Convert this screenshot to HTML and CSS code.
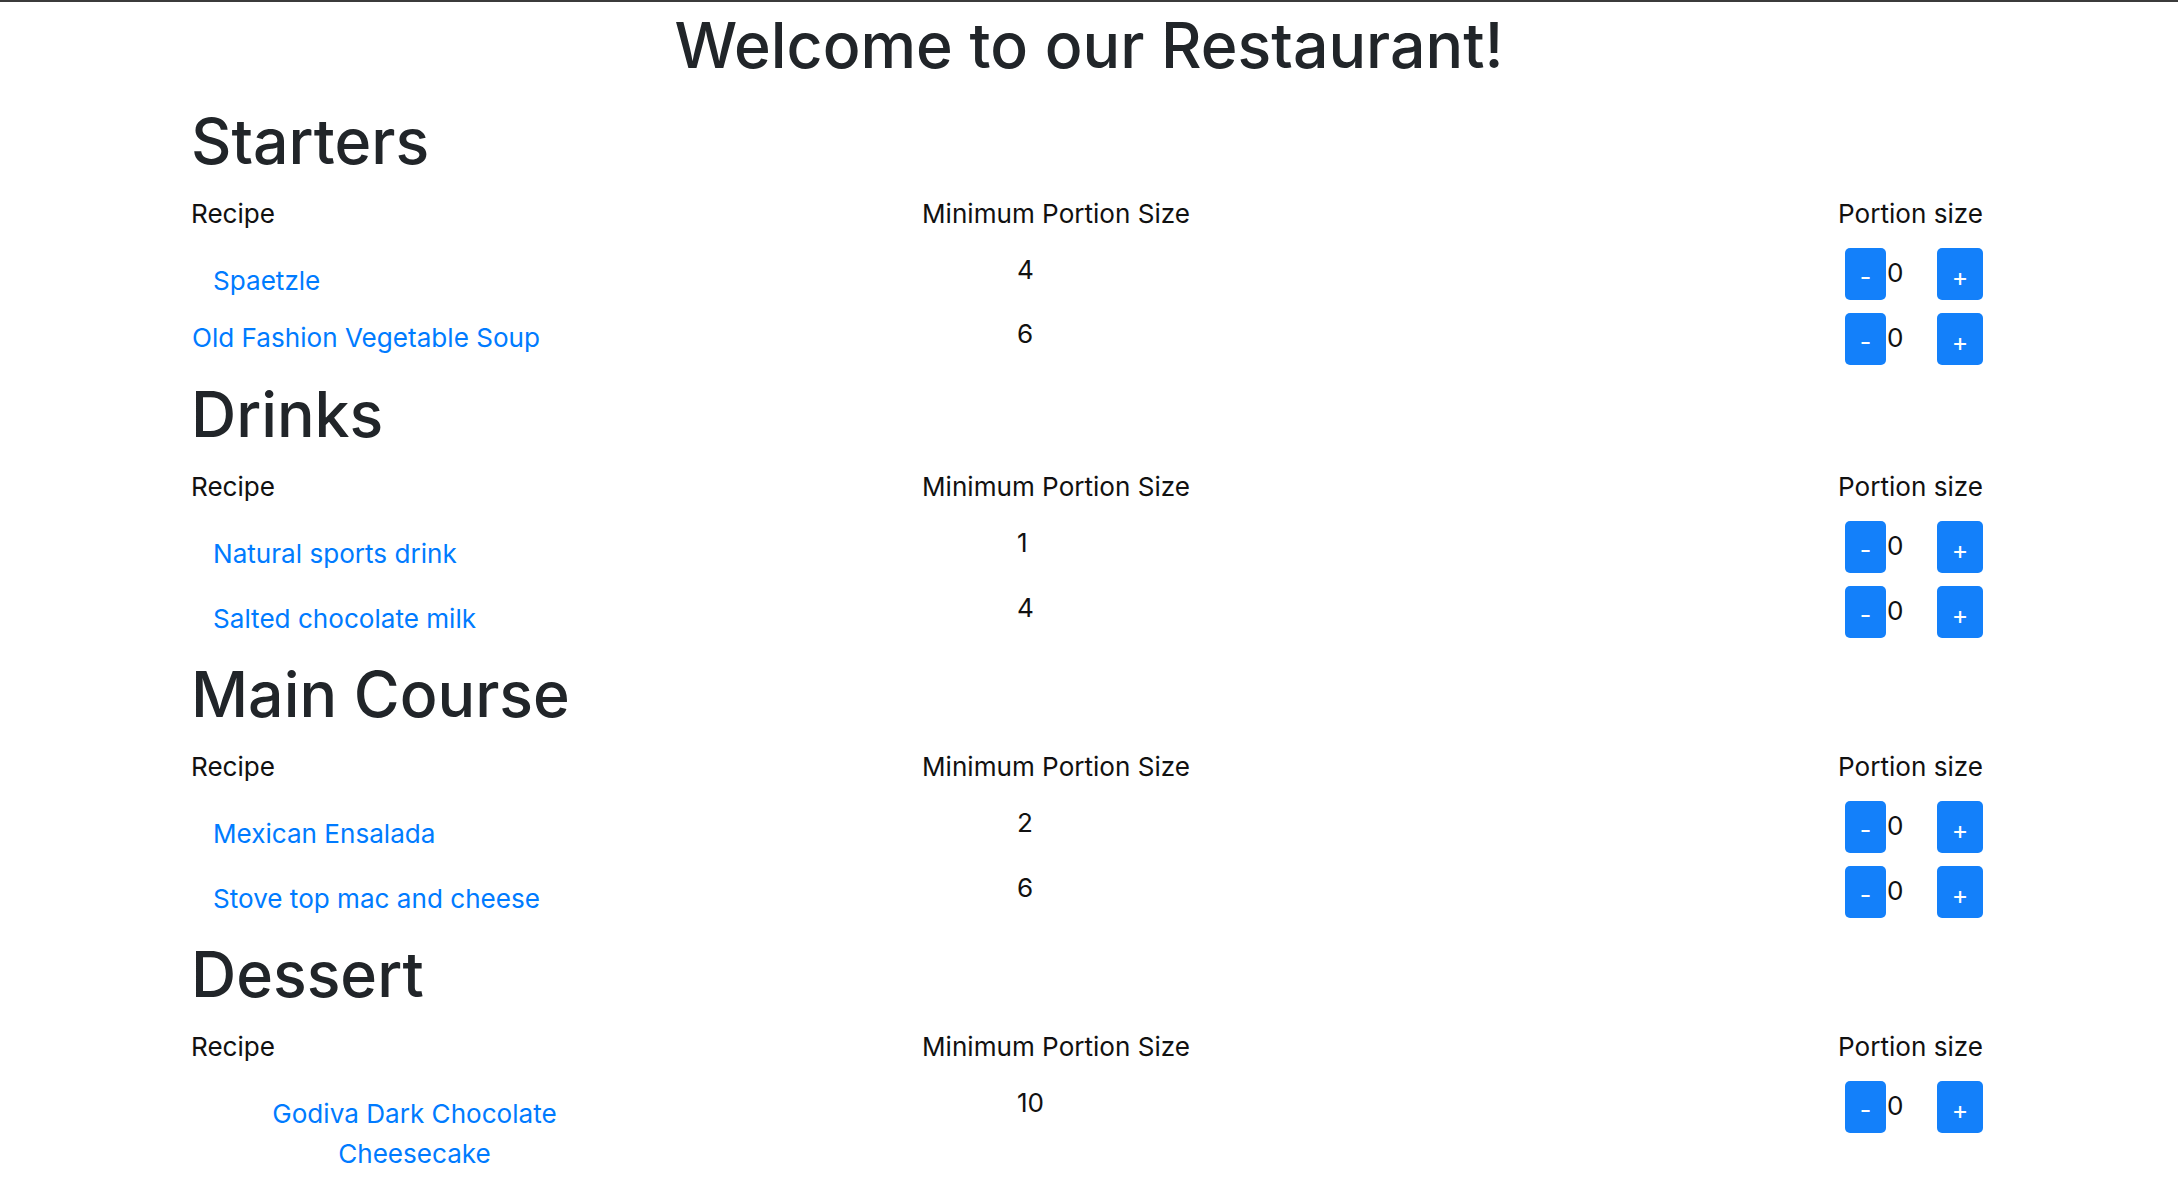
FILE: index.html
```html
<!DOCTYPE html>
<html lang="en">
<head>
<meta charset="utf-8">
<title>Restaurant</title>
<link rel="stylesheet" href="styles.css">
</head>
<body>
<h1 class="title">Welcome to our Restaurant!</h1>
<main class="menu">
  <section class="course">
    <h2 class="course-title">Starters</h2>
    <div class="head-row">
      <span>Recipe</span>
      <span>Minimum Portion Size</span>
      <span class="head-portion">Portion size</span>
    </div>
    <div class="row">
      <div><a class="recipe-link" href="#">Spaetzle</a></div>
      <div class="min">4</div>
      <div class="controls"><button class="btn btn-minus">-</button><span class="count">0</span><button class="btn btn-plus">+</button></div>
    </div>
    <div class="row row--short">
      <div><a class="recipe-link recipe-link--flush" href="#">Old Fashion Vegetable Soup</a></div>
      <div class="min min--high">6</div>
      <div class="controls"><button class="btn btn-minus">-</button><span class="count">0</span><button class="btn btn-plus">+</button></div>
    </div>
  </section>

  <section class="course">
    <h2 class="course-title">Drinks</h2>
    <div class="head-row">
      <span>Recipe</span>
      <span>Minimum Portion Size</span>
      <span class="head-portion">Portion size</span>
    </div>
    <div class="row">
      <div><a class="recipe-link" href="#">Natural sports drink</a></div>
      <div class="min">1</div>
      <div class="controls"><button class="btn btn-minus">-</button><span class="count">0</span><button class="btn btn-plus">+</button></div>
    </div>
    <div class="row">
      <div><a class="recipe-link" href="#">Salted chocolate milk</a></div>
      <div class="min">4</div>
      <div class="controls"><button class="btn btn-minus">-</button><span class="count">0</span><button class="btn btn-plus">+</button></div>
    </div>
  </section>

  <section class="course">
    <h2 class="course-title">Main Course</h2>
    <div class="head-row">
      <span>Recipe</span>
      <span>Minimum Portion Size</span>
      <span class="head-portion">Portion size</span>
    </div>
    <div class="row">
      <div><a class="recipe-link" href="#">Mexican Ensalada</a></div>
      <div class="min">2</div>
      <div class="controls"><button class="btn btn-minus">-</button><span class="count">0</span><button class="btn btn-plus">+</button></div>
    </div>
    <div class="row">
      <div><a class="recipe-link" href="#">Stove top mac and cheese</a></div>
      <div class="min">6</div>
      <div class="controls"><button class="btn btn-minus">-</button><span class="count">0</span><button class="btn btn-plus">+</button></div>
    </div>
  </section>

  <section class="course">
    <h2 class="course-title">Dessert</h2>
    <div class="head-row">
      <span>Recipe</span>
      <span>Minimum Portion Size</span>
      <span class="head-portion">Portion size</span>
    </div>
    <div class="row row--auto">
      <div><a class="recipe-link recipe-link--center" href="#">Godiva Dark Chocolate Cheesecake</a></div>
      <div class="min">10</div>
      <div class="controls"><button class="btn btn-minus">-</button><span class="count">0</span><button class="btn btn-plus">+</button></div>
    </div>
  </section>
</main>
</body>
</html>
```

FILE: styles.css
```css
html, body {
  margin: 0;
  padding: 0;
  background: #ffffff;
}

body {
  border-top: 2px solid #3b3b3b;
  font-family: Inter, "Liberation Sans", sans-serif;
  font-size: 26.1px;
  line-height: 38px;
  color: #212529;
  overflow: hidden;
  height: 1176px;
  box-sizing: border-box;
}

.title {
  margin: 3px 0 0;
  font-size: 62.6px;
  line-height: 80px;
  font-weight: 500;
  text-align: center;
  color: #212529;
}

.menu {
  margin-left: 191px;
  width: 1792px;
}

.course-title {
  margin: 3px 0 0;
  font-size: 62.6px;
  line-height: 80px;
  font-weight: 500;
  color: #212529;
}

.course:first-child .course-title {
  margin-top: 16px;
}

.head-row,
.row {
  display: grid;
  grid-template-columns: 731px 1fr auto;
  align-items: start;
}

.head-row {
  margin: 14px 0 15px;
  color: #111;
}

.head-portion {
  justify-self: end;
}

.row {
  height: 65px;
}

.row--short {
  height: 58px;
}

.row--auto {
  height: auto;
}

.recipe-link {
  display: inline-block;
  padding: 14px 22px 0;
  color: #007bff;
  text-decoration: none;
}

.recipe-link--flush {
  padding: 6px 0 0 1px;
}

.recipe-link--center {
  display: block;
  box-sizing: border-box;
  width: 447px;
  padding: 13px 22px 0;
  line-height: 40px;
  text-align: center;
}

.min {
  padding: 3px 0 0 95px;
  color: #111;
}

.min--high {
  padding-top: 2px;
}

.controls {
  display: flex;
  align-items: flex-start;
}

.btn {
  display: flex;
  align-items: center;
  justify-content: center;
  height: 52px;
  padding: 7px 0 0;
  margin: 0;
  border: 0;
  border-radius: 5px;
  background: #1380fa;
  color: #ffffff;
  font-family: Inter, "Liberation Sans", sans-serif;
  font-size: 25px;
  line-height: 1;
  box-sizing: border-box;
}

.btn-minus {
  width: 41px;
}

.btn-plus {
  width: 46px;
}

.count {
  width: 50px;
  margin-left: 1px;
  padding-top: 6px;
  color: #111;
}
```
